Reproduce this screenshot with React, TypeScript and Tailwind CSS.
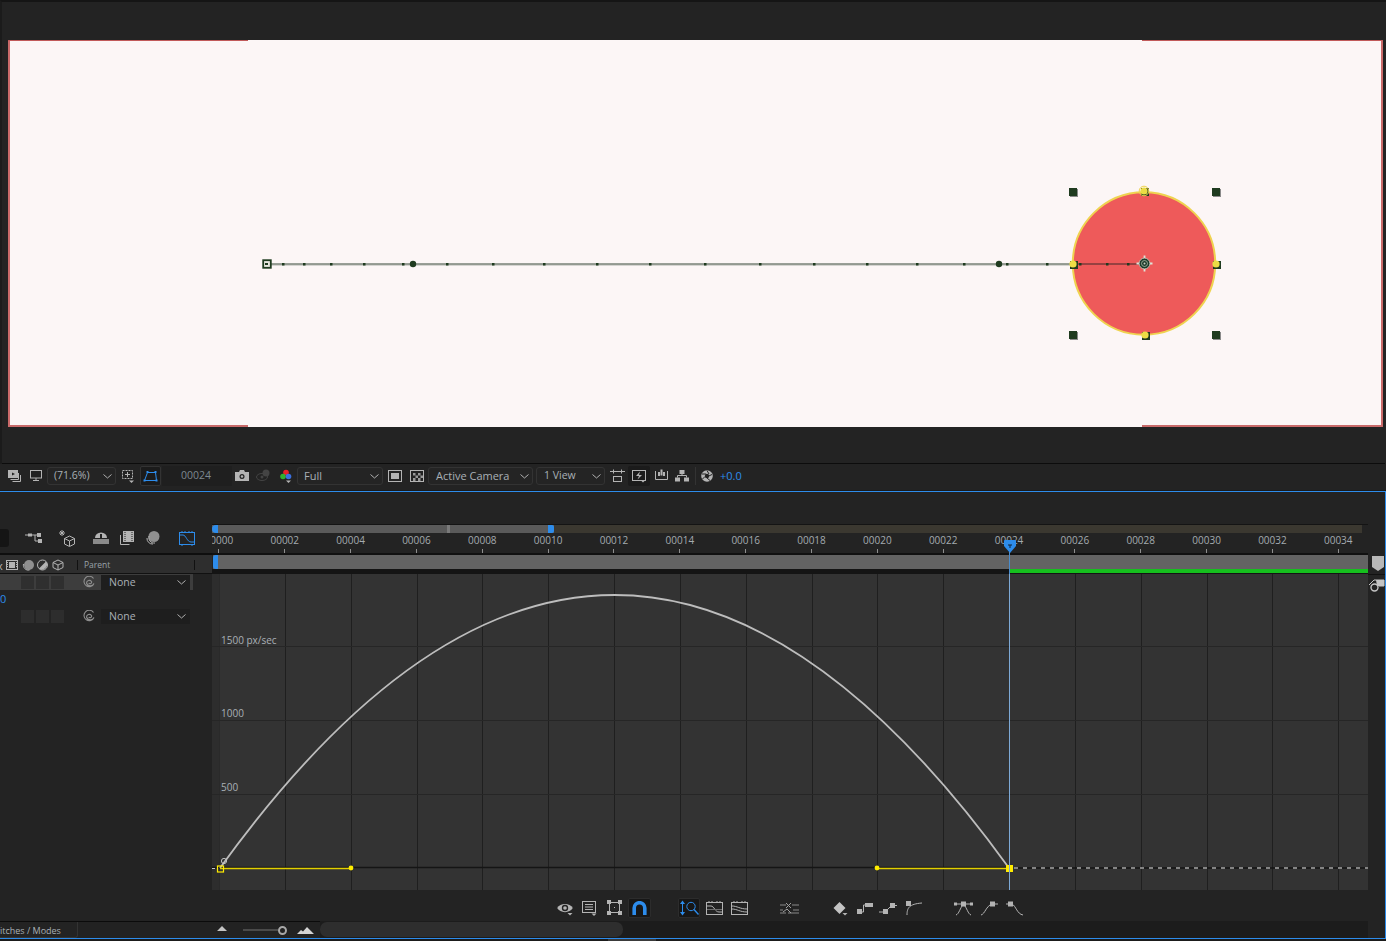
import React from "react";

const Ico = ({ w, h = 16, className = "", children }: { w: number; h?: number; className?: string; children?: React.ReactNode }) => (
  <svg width={w} height={h} viewBox={`0 0 ${w} ${h}`} fill="none" stroke="#b4b4b4" strokeWidth={1} className={`shrink-0 ${className}`}>
    {children}
  </svg>
);

const Chevron = () => (
  <svg width="9" height="5" viewBox="0 0 9 5" fill="none" stroke="#b0b0b0" strokeWidth={1} className="shrink-0">
    <path d="M0.5 0.5 L4.5 4 L8.5 0.5" />
  </svg>
);

const Drop = ({ className = "", label, small = false }: { className?: string; label: string; small?: boolean }) => (
  <div className={`h-[18px] shrink-0 rounded-[3px] border border-[#333333] bg-[#242424] flex items-center justify-between pl-[6px] pr-[3px] text-[#a9b0b6] ${small ? "text-[10.5px]" : "text-[11px]"} ${className}`}>
    <span className="whitespace-nowrap">{label}</span>
    <Chevron />
  </div>
);

const Arrow = ({ x, y }: { x: number; y: number }) => <path d={`M${x} ${y} h5 l-2.5 2.5 z`} fill="#b4b4b4" stroke="none" />;

const ViewerToolbar = () => (
  <div className="h-[26px] shrink-0 flex items-center pl-[8px] pb-[2px] bg-[#232323]">
    <Ico w={13}>
      <rect x="0.5" y="2.5" width="9" height="7" fill="#b4b4b4" />
      <path d="M4 4.5 l3 1.5 -3 1.5z" fill="#232323" stroke="none" />
      <path d="M10.5 5 v6.5 h-8 M12.5 7 v6.5 h-8" />
    </Ico>
    <Ico w={12} className="ml-[9px]">
      <rect x="0.5" y="2.5" width="11" height="7.5" />
      <path d="M6 10 v2 M3 12.5 h6" />
    </Ico>
    <Drop className="ml-[5px] w-[69px]" label="(71.6%)" small />
    <Ico w={14} className="ml-[5px]">
      <rect x="1.5" y="2.5" width="10" height="8" strokeDasharray="2 1" />
      <path d="M6.5 4 v5 M4 6.5 h5" />
      <Arrow x={8} y={12.5} />
    </Ico>
    <div className="ml-[5px] w-[21px] h-[20px] shrink-0 rounded-[2px] border border-[#333333] bg-[#1b1b1b] flex items-center justify-center">
      <svg width="15" height="13" viewBox="0 0 15 13" fill="none" stroke="#2d8ceb" strokeWidth={1}>
        <path d="M4.5 2.5 H12.5 L13.5 10.5 H1.5 Z" />
        <rect x="3.5" y="1" width="2" height="2" fill="#2d8ceb" stroke="none" />
        <rect x="11.5" y="1" width="2" height="2" fill="#2d8ceb" stroke="none" />
        <rect x="0.5" y="9.5" width="2" height="2" fill="#2d8ceb" stroke="none" />
        <rect x="12.5" y="9.5" width="2" height="2" fill="#2d8ceb" stroke="none" />
      </svg>
    </div>
    <div className="ml-[1px] w-[70px] h-[20px] shrink-0 bg-[#1f1f1f] flex items-center justify-center pr-[2px] text-[10.5px] text-[#7d8890]">00024</div>
    <Ico w={14} className="ml-[3px]">
      <path d="M0 4 h4 l1 -2 h4 l1 2 h4 v9 h-14z" fill="#b4b4b4" stroke="none" />
      <circle cx="7" cy="8.5" r="2.5" fill="#232323" stroke="none" />
      <circle cx="7" cy="8.5" r="1.2" fill="#b4b4b4" stroke="none" />
    </Ico>
    <Ico w={15} className="ml-[7px]">
      <circle cx="10" cy="5" r="3.5" fill="#444444" stroke="none" />
      <ellipse cx="6" cy="9" rx="5.5" ry="3.5" stroke="#444444" />
      <circle cx="6" cy="9" r="1.5" fill="#444444" stroke="none" />
    </Ico>
    <Ico w={12} className="ml-[9px]">
      <circle cx="6" cy="4.5" r="2.8" fill="#e8202a" stroke="none" />
      <circle cx="3" cy="8.5" r="2.8" fill="#30b030" stroke="none" />
      <circle cx="8.5" cy="8.5" r="2.8" fill="#3b70e0" stroke="none" />
      <Arrow x={6} y={12.5} />
    </Ico>
    <Drop className="ml-[5px] w-[86px]" label="Full" />
    <Ico w={14} className="ml-[5px]">
      <rect x="0.5" y="2.5" width="13" height="11" />
      <rect x="3" y="5" width="8" height="6" fill="#b4b4b4" stroke="none" />
    </Ico>
    <Ico w={14} className="ml-[8px]">
      <rect x="0.5" y="2.5" width="13" height="11" />
      <path d="M3 5h2.5v2.5H3z M8 5h2.5v2.5H8z M5.5 7.5H8V10H5.5z M10.5 7.5H13V10h-2.5z M3 10h2.5v3H3z M8 10h2.5v3H8z" fill="#999999" stroke="none" />
    </Ico>
    <Drop className="ml-[4px] w-[105px] pl-[7px]" label="Active Camera" />
    <Drop className="ml-[3px] w-[69px] pl-[7px]" label="1 View" small />
    <Ico w={15} className="ml-[5px]">
      <path d="M0 3.5 h15 M3.5 1.5 v4 M11.5 1.5 v4" />
      <rect x="3.5" y="8.5" width="8" height="5" />
    </Ico>
    <div className="ml-[3px] w-[22px] h-[20px] shrink-0 rounded-[2px] bg-[#1b1b1b] flex items-center justify-center">
      <Ico w={14} h={13}>
        <rect x="0.5" y="0.5" width="13" height="10" />
        <path d="M8 1.5 L4 6 h3 L5.5 9.5 L10 5 H7z" fill="#b4b4b4" stroke="none" />
        <Arrow x={8.5} y={10} />
      </Ico>
    </div>
    <Ico w={13} className="ml-[5px]">
      <path d="M0.5 3 v8.5 h12 V3" />
      <path d="M4 4 v4 M6.5 1.5 v6 M9 4 v4" strokeWidth={2} />
    </Ico>
    <Ico w={14} className="ml-[7px]">
      <rect x="4.5" y="2" width="5" height="4" fill="#b4b4b4" stroke="none" />
      <rect x="0" y="9.5" width="5" height="4" fill="#b4b4b4" stroke="none" />
      <rect x="9" y="9.5" width="5" height="4" fill="#b4b4b4" stroke="none" />
      <path d="M7 6 v2 M2.5 9.5 V7.5 H11.5 V9.5" />
    </Ico>
    <div className="ml-[6px] w-px h-[18px] shrink-0 bg-[#333333]" />
    <Ico w={12} className="ml-[5px]">
      <circle cx="6" cy="8" r="5.8" fill="#b4b4b4" stroke="none" />
      <circle cx="6" cy="8" r="2.2" fill="#232323" stroke="none" />
      <path d="M6 2.5 L8 6 M11 6.5 L7.8 8 M9 12.5 L6 10 M1.5 11 L4 8.5 M1 6 L5 6" stroke="#232323" />
    </Ico>
    <span className="ml-[7px] text-[11px] text-[#2d8ceb]">+0.0</span>
  </div>
);

const Composition = () => {
  const dots = [283, 304, 331, 364, 403, 447, 493, 544, 597, 650, 705, 760, 814, 867, 917, 964, 1007, 1047];
  const inner = [1080, 1107, 1128];
  const corners: [number, number][] = [[1073, 192], [1216, 192], [1073, 335], [1216, 335]];
  const mids: [number, number][] = [[1073, 264], [1216, 264], [1145, 335], [1144, 191]];
  return (
    <div className="relative ml-[8px] mt-[38px] w-[1375px] h-[387px] bg-[#fcf6f6] shrink-0">
      <div className="absolute left-0 top-0 bottom-0 w-[2px] bg-[#c96a6a]" />
      <div className="absolute right-0 top-0 bottom-0 w-[2px] bg-[#c96a6a]" />
      <div className="absolute left-0 top-0 w-[240px] h-px bg-[#c15a5a]" />
      <div className="absolute right-0 top-0 w-[241px] h-px bg-[#c15a5a]" />
      <div className="absolute left-0 bottom-0 w-[240px] h-[2px] bg-[#c96a6a]" />
      <div className="absolute right-0 bottom-0 w-[241px] h-[2px] bg-[#c96a6a]" />
      <svg className="absolute inset-0" width="1375" height="387" viewBox="8 40 1375 387">
        <path d="M267 264.5 H1073" stroke="#c9c9c5" strokeWidth="2.4" />
        <path d="M267 264 H1073" stroke="#5c6a5c" strokeWidth="1" />
        <circle cx="1144" cy="263.5" r="71.2" fill="#ee5a5a" stroke="#efd350" strokeWidth="2" />
        <path d="M1073 264 H1145" stroke="#7a3a3a" strokeWidth="1.6" />
        {dots.map((x) => (
          <rect key={x} x={x - 1} y={263} width="2.5" height="2.5" fill="#1f3b1f" />
        ))}
        {inner.map((x) => (
          <rect key={x} x={x - 1} y={263} width="2.5" height="2.5" fill="#1f3b1f" />
        ))}
        <circle cx="413" cy="264" r="3.2" fill="#1f3b1f" />
        <circle cx="999" cy="264" r="3.2" fill="#1f3b1f" />
        <rect x="263.2" y="260.2" width="7.6" height="7.6" fill="#e8e8e0" stroke="#1f3b1f" strokeWidth="1.8" />
        <rect x="265" y="263" width="3" height="2" fill="#1f3b1f" />
        {corners.map(([x, y]) => (
          <g key={`${x}-${y}`}>
            <rect x={x - 3} y={y - 3} width="8" height="8" fill="#8a8a8a" />
            <rect x={x - 4} y={y - 4} width="8" height="8" fill="#1f3b1f" />
          </g>
        ))}
        {mids.map(([x, y]) => (
          <g key={`${x}-${y}`}>
            <rect x={x - 3} y={y - 3} width="8" height="8" fill="#1f3b1f" />
            <circle cx={x} cy={y} r="3.6" fill="#ecdc45" />
          </g>
        ))}
        <circle cx="1144" cy="191" r="4.8" fill="none" stroke="#efd350" strokeWidth="1" />
        <g transform="translate(1144.5 263.5)">
          <path d="M-8 0 H8 M0 -8 V8" stroke="#dfe4d8" strokeWidth="1.8" />
          <circle r="5.4" fill="#1f3b2c" stroke="#c8d0c0" strokeWidth="0.8" />
          <circle r="3" fill="none" stroke="#a8c0a8" strokeWidth="0.8" />
          <circle r="1" fill="#c8d0c0" />
        </g>
      </svg>
    </div>
  );
};

const LayerSquares = ({ tone }: { tone: string }) => (
  <div className="flex gap-[2px] ml-[21px]">
    <div className={`w-[13px] h-[13px] ${tone}`} />
    <div className={`w-[13px] h-[13px] ${tone}`} />
    <div className={`w-[13px] h-[13px] ${tone}`} />
  </div>
);

const Spiral = () => (
  <Ico w={12} h={12} className="ml-[19px]">
    <path d="M10.5 2.5 A5.2 5.2 0 1 0 11 7.5 A4 4 0 0 1 3.5 7 A2.8 2.8 0 0 1 8.5 5.5 A1.6 1.6 0 0 1 5.7 7" stroke="#8e8e8e" strokeWidth="1.1" />
  </Ico>
);

const NoneBox = () => (
  <div className="ml-[6px] w-[89px] h-[15px] bg-[#1e1e1e] flex items-center justify-between pl-[7px] pr-[4px] text-[10.5px] text-[#a9b0b6]">
    <span className="ml-px pt-[2px]">None</span>
    <Chevron />
  </div>
);

const TimelineLeft = () => (
  <div className="w-[212px] shrink-0 flex flex-col bg-[#232323]">
    <div className="h-[29px] shrink-0 flex items-center pb-[2px]">
      <div className="w-[9px] h-[18px] bg-[#151515] rounded-r-[3px] shrink-0" />
      <Ico w={17} className="ml-[16px]">
        <path d="M0 5 h7 M7 5 h5 M10 5 v6 h3" />
        <rect x="3" y="3.5" width="4" height="3" fill="#b4b4b4" stroke="none" />
        <rect x="12" y="3" width="4" height="4" fill="#b4b4b4" stroke="none" />
        <rect x="13" y="9" width="4" height="4" fill="#b4b4b4" stroke="none" />
      </Ico>
      <Ico w={17} h={18} className="ml-[16px]">
        <path d="M4 1 v6 M1 4 h6 M2 2 l4 4 M6 2 l-4 4" />
        <path d="M11.5 7 l5 2.5 v5.5 l-5 2.5 -5 -2.5 v-5.5z M6.5 9.5 l5 2.5 5 -2.5 M11.5 12 v5" />
      </Ico>
      <Ico w={16} className="ml-[18px]">
        <path d="M2 8 a6 5.5 0 0 1 12 0z" fill="#b4b4b4" stroke="none" />
        <rect x="7" y="4" width="2" height="6" fill="#232323" stroke="none" />
        <rect x="0" y="9" width="16" height="5" fill="#8a8a8a" stroke="none" />
      </Ico>
      <Ico w={14} className="ml-[11px]">
        <path d="M0.5 5 v9.5 h9" />
        <rect x="3" y="1" width="11" height="11" fill="#b4b4b4" stroke="none" />
        <path d="M5 2 v9 M12 2 v9" stroke="#232323" strokeDasharray="1 1" />
      </Ico>
      <Ico w={14} className="ml-[12px]">
        <circle cx="8" cy="6.5" r="5.5" fill="#8f8f8f" stroke="none" />
        <path d="M3 6 a5.5 5.5 0 0 0 6 7 M1 8 a5.5 5.5 0 0 0 6 6" />
      </Ico>
      <svg width="16" height="16" viewBox="0 0 16 16" fill="none" stroke="#2d8ceb" strokeWidth={1} className="ml-[19px] shrink-0">
        <rect x="0.5" y="2.5" width="15" height="12" />
        <path d="M3 1 v2 M6 1 v2 M10 1 v2 M13 1 v2 M3 14 v2 M13 14 v2" />
        <path d="M1 5 h3 c3 0 4 7 8 7 h3" />
      </svg>
    </div>
    <div className="h-[2px] shrink-0 bg-[#0e0e0e]" />
    <div className="h-[18px] shrink-0 flex items-center pt-[2px] bg-[#2e2e2e] text-[8.5px] text-[#9aa2a8]">
      <span className="w-[6px] -ml-[3px] text-[11px] leading-[11px] text-[#b4b4b4]">x</span>
      <Ico w={12} h={12} className="ml-[3px]">
        <rect x="0.5" y="1.5" width="11" height="9" stroke="#b4b4b4" />
        <rect x="3" y="3" width="6" height="6" fill="#b4b4b4" stroke="none" />
        <path d="M1.5 3 v6 M10.5 3 v6" strokeDasharray="1 1" />
      </Ico>
      <Ico w={14} h={12} className="ml-[3px]">
        <circle cx="8" cy="6" r="5" fill="#8f8f8f" stroke="none" />
        <path d="M2.5 5 a5 5 0 0 0 6 6" />
      </Ico>
      <Ico w={11} h={12} className="ml-[2px]">
        <circle cx="5.5" cy="6" r="5" stroke="#b4b4b4" />
        <path d="M9 2.5 a5 5 0 0 1 -7 7z" fill="#b4b4b4" stroke="none" />
      </Ico>
      <Ico w={12} h={12} className="ml-[4px]">
        <path d="M6 1 l5 2.5 v5 l-5 2.5 -5 -2.5 v-5z M1 3.5 l5 2.5 5 -2.5 M6 6 v5" />
      </Ico>
      <div className="ml-[13px] w-px h-[10px] bg-[#111111]" />
      <span className="ml-[6px] w-[26px]">Parent</span>
      <div className="ml-[84px] w-px h-[10px] bg-[#111111]" />
    </div>
    <div className="h-px shrink-0 bg-[#111111]" />
    <div className="h-[16px] shrink-0 flex items-center bg-[#232323]">
      <div className="w-[193px] h-full flex items-center bg-[#3d3d3d]">
        <LayerSquares tone="bg-[#2f2f2f]" />
        <Spiral />
        <NoneBox />
      </div>
    </div>
    <div className="h-[18px] shrink-0 flex items-center text-[11px] text-[#2d8ceb]">
      <span>0</span>
    </div>
    <div className="h-[16px] shrink-0 flex items-center">
      <LayerSquares tone="bg-[#2d2d2d]" />
      <Spiral />
      <NoneBox />
    </div>
  </div>
);

const labels = ["00000", "00002", "00004", "00006", "00008", "00010", "00012", "00014", "00016", "00018", "00020", "00022", "00024", "00026", "00028", "00030", "00032", "00034"];
const gridX = [219, 285, 351, 417, 482, 548, 614, 680, 746, 812, 877, 943, 1075, 1141, 1207, 1272, 1338];

const Ruler = () => (
  <div className="h-[19px] shrink-0 overflow-hidden flex bg-[#232323]">
    <div className="flex -ml-[26px]">
      {labels.map((l) => (
        <div key={l} className="w-[65.85px] shrink-0 flex flex-col items-center text-[10px] leading-[12px] text-[#a4abb0]">
          <span>{l}</span>
          <div className="w-px h-[4px] mt-[3px] bg-[#8f8f8f]" />
        </div>
      ))}
    </div>
  </div>
);

const Graph = () => (
  <div className="relative h-[316px] shrink-0 bg-[#333333] overflow-hidden">
    <svg className="absolute inset-0" width="1156" height="316" viewBox="212 574 1156 316" fill="none">
      <rect x="212" y="574" width="7" height="316" fill="#2d2d2d" />
      {gridX.map((x) => (
        <path key={x} d={`M${x + 0.5} 574 V890`} stroke={x === 219 ? "#2a2a2a" : "#1f1f1f"} />
      ))}
      <path d="M212 646.5 H1368 M212 720.5 H1368 M212 794.5 H1368" stroke="#262626" />
      <path d="M212 867.5 H1009" stroke="#151515" strokeWidth="1.4" />
      <path d="M1014 868 H1368" stroke="#151515" strokeWidth="1.4" />
      <path d="M1014 868 H1368" stroke="#a8a8a8" strokeWidth="1.4" strokeDasharray="4 5" />
      <path d="M220 868 Q614.5 322 1009 868" stroke="#bdbdbd" strokeWidth="1.8" />
      <path d="M1009.5 574 V890" stroke="#7da9d6" strokeWidth="1" />
      <path d="M220 868.5 H351 M877 868.5 H1009" stroke="#e3d000" strokeWidth="1.4" />
      <circle cx="351" cy="868" r="2.4" fill="#ffec00" />
      <circle cx="877" cy="868" r="2.4" fill="#ffec00" />
      <rect x="217.5" y="866" width="6" height="6" stroke="#ffec00" strokeWidth="1.2" />
      <rect x="1006" y="865" width="3" height="7" fill="#ffec00" />
      <rect x="1010" y="865" width="3" height="7" fill="#ffec00" />
      <circle cx="224" cy="861" r="2.6" stroke="#c4c4c4" strokeWidth="1" />
      <path d="M212 868.5 H215" stroke="#c4c4c4" />
    </svg>
    <span className="absolute left-[9px] top-[60px] text-[10px] leading-[12px] text-[#a9b0b6]">1500 px/sec</span>
    <span className="absolute left-[9px] top-[133px] text-[10px] leading-[12px] text-[#a9b0b6]">1000</span>
    <span className="absolute left-[9px] top-[207px] text-[10px] leading-[12px] text-[#a9b0b6]">500</span>
  </div>
);

const GraphToolbar = () => (
  <div className="flex-1 flex items-center pl-[345px] pt-[5px] bg-[#232323]">
    <Ico w={16}>
      <path d="M0.2 8 C3 2.5 13 2.5 15.8 8 C13 13.5 3 13.5 0.2 8z" fill="#b4b4b4" stroke="none" />
      <circle cx="8" cy="8" r="3.2" fill="#232323" stroke="none" />
      <circle cx="8" cy="8" r="1.8" fill="#b4b4b4" stroke="none" />
      <Arrow x={10.5} y={13} />
    </Ico>
    <Ico w={15} className="ml-[9px]">
      <rect x="0.5" y="1.5" width="13" height="11" />
      <path d="M3 4.5 h8 M3 7 h8 M3 9.5 h8" />
      <Arrow x={9.5} y={13.5} />
    </Ico>
    <Ico w={15} className="ml-[10px]">
      <rect x="2.5" y="2.5" width="10" height="10" />
      <path d="M0 0h4v4H0z M11 0h4v4h-4z M0 11h4v4H0z M11 11h4v4h-4z" fill="#b4b4b4" stroke="none" />
      <rect x="7" y="7" width="1" height="1" fill="#b4b4b4" stroke="none" />
    </Ico>
    <div className="ml-[6px] w-[23px] h-[20px] shrink-0 rounded-[2px] border border-[#2c2c2c] bg-[#171717] flex items-center justify-center">
      <svg width="15" height="14" viewBox="0 0 15 14" fill="none" stroke="#2d8ceb" strokeWidth={3.6}>
        <path d="M2.2 14 V7 a5.3 5.3 0 0 1 10.6 0 V14" />
      </svg>
    </div>
    <div className="ml-[27px] w-[22px] h-[20px] shrink-0 rounded-[2px] border border-[#2c2c2c] bg-[#171717] flex items-center justify-center">
      <svg width="19" height="16" viewBox="0 0 19 16" fill="none" stroke="#2d8ceb" strokeWidth={1}>
        <path d="M2.5 2 V14" />
        <path d="M0 4 L2.5 0.5 L5 4z M0 12 L2.5 15.5 L5 12z" fill="#2d8ceb" stroke="none" />
        <circle cx="11" cy="6.5" r="4.2" />
        <path d="M14 9.5 L18.5 14.5" strokeWidth={1.4} />
      </svg>
    </div>
    <Ico w={17} className="ml-[6px]">
      <rect x="0.5" y="2.5" width="16" height="12" />
      <path d="M3 1 v2 M6 1 v2 M11 1 v2 M14 1 v2" />
      <path d="M1 6 h4 c3 0 4 6 8 6 h3" />
      <path d="M1 9.5 h15" stroke="#6e6e6e" />
    </Ico>
    <Ico w={17} className="ml-[8px]">
      <rect x="0.5" y="2.5" width="16" height="12" />
      <path d="M3 1 v2 M6 1 v2 M11 1 v2 M14 1 v2" />
      <path d="M1 6 c5 0 8 3 15 3 M1 9 c5 0 8 3 15 3" />
    </Ico>
    <Ico w={19} className="ml-[32px]">
      <path d="M0 5 h6 M12 5 h7 M0 10 h3 M13 10 h6 M8 13 h11 M0 13 h6" stroke="#8a8a8a" />
      <path d="M6 3 l5 5 M11 3 l-5 5 M3 12 l4 -3 4 4" stroke="#a0a0a0" />
    </Ico>
    <Ico w={15} className="ml-[34px]">
      <path d="M6.5 2 L12.5 8 L6.5 14 L0.5 8z" fill="#c4c4c4" stroke="none" />
      <Arrow x={9.5} y={13} />
    </Ico>
    <Ico w={18} className="ml-[7px]">
      <path d="M7 12 h1.5 V5 H11" />
      <rect x="2" y="9" width="5" height="5" fill="#b4b4b4" stroke="none" />
      <rect x="10" y="3" width="8" height="4" fill="#b4b4b4" stroke="none" />
    </Ico>
    <Ico w={18} className="ml-[6px]">
      <path d="M0 12 h5 M8 10 L12 6 M15 5.5 h3" />
      <rect x="4" y="9" width="5" height="5" fill="#b4b4b4" stroke="none" />
      <rect x="11" y="3" width="5" height="5" fill="#b4b4b4" stroke="none" />
    </Ico>
    <Ico w={16} className="ml-[9px]">
      <path d="M1 15 C1 8 3 4 16 3" />
      <rect x="0" y="1" width="5" height="5" fill="#b4b4b4" stroke="none" />
    </Ico>
    <Ico w={19} className="ml-[32px]">
      <path d="M2 15 C5 14 6 8 9.5 4 C13 8 14 14 17 15" />
      <path d="M0 4 h19" />
      <rect x="7" y="1.5" width="5" height="5" fill="#b4b4b4" stroke="none" />
      <rect x="0" y="2.5" width="3" height="3" fill="#b4b4b4" stroke="none" />
      <rect x="16" y="2.5" width="3" height="3" fill="#b4b4b4" stroke="none" />
    </Ico>
    <Ico w={17} className="ml-[8px]">
      <path d="M0 15 C4 14 5 6 11 4 h6" />
      <rect x="9" y="1.5" width="5" height="5" fill="#b4b4b4" stroke="none" />
    </Ico>
    <Ico w={18} className="ml-[7px]">
      <path d="M1 4 h6 C11 6 12 14 18 15" />
      <rect x="3" y="1.5" width="5" height="5" fill="#b4b4b4" stroke="none" />
    </Ico>
  </div>
);

const TimelineCenter = () => (
  <div className="w-[1156px] shrink-0 flex flex-col bg-[#232323]">
    <div className="h-[10px] shrink-0 flex border-t border-[#141414] pb-px pr-[6px] bg-[#232323]">
      <div className="w-[342px] shrink-0 flex bg-[#5a5a5a]">
        <div className="w-[6px] bg-[#2d8ceb] rounded-l-full" />
        <div className="ml-[229px] w-[3px] bg-[#7a7a7a]" />
        <div className="ml-auto w-[6px] bg-[#2d8ceb] rounded-r-[2px]" />
      </div>
      <div className="flex-1 bg-[#3b3830]" />
    </div>
    <Ruler />
    <div className="h-[2px] shrink-0 bg-[#111111]" />
    <div className="h-[14px] shrink-0 flex bg-[#636363]">
      <div className="w-[1px] bg-[#232323]" />
      <div className="w-[5px] bg-[#2d8ceb] rounded-l-[3px]" />
    </div>
    <div className="h-[5px] shrink-0 flex bg-[#141414]">
      <div className="w-[798px]" />
      <div className="flex-1 h-[4px] bg-[#16c01e]" />
    </div>
    <Graph />
    <GraphToolbar />
  </div>
);

const TimelineStrip = () => (
  <div className="w-[17px] shrink-0 flex flex-col bg-[#232323]">
    <div className="h-[31px]" />
    <svg width="17" height="18" viewBox="0 0 17 18" className="shrink-0">
      <path d="M4 1 H16 V12 L10 16 L4 12z" fill="#b8b8b8" />
    </svg>
    <div className="h-[1px] mt-px bg-[#111111]" />
    <svg width="17" height="16" viewBox="0 0 17 16" fill="none" stroke="#c4c4c4" className="shrink-0 mt-[2px]">
      <path d="M1 8 L6 3 H16 V9 H11" />
      <path d="M8 3 H16 V9 H9z" fill="#c4c4c4" stroke="none" />
      <circle cx="6.5" cy="10.5" r="3.5" strokeWidth="1.4" />
    </svg>
  </div>
);

const BottomBar = () => (
  <div className="h-[17px] shrink-0 flex">
    <div className="w-[320px] shrink-0 flex items-center border-t border-[#0b0b0b] bg-[#222222]">
      <div className="w-[78px] h-full shrink-0 overflow-hidden rounded-br-[3px] border-r border-b border-[#333333] bg-[#232323] flex items-center pt-[2px]">
        <span className="-ml-[12px] whitespace-nowrap text-[9px] text-[#a9b0b6]">Switches / Modes</span>
      </div>
      <svg width="12" height="8" viewBox="0 0 12 8" className="ml-[137px] shrink-0 -mt-[3px]">
        <path d="M0 6 H2 L5 3 L7 1 L10 4 L12 6z" fill="#c4c4c4" />
      </svg>
      <div className="ml-[16px] w-[35px] h-[2px] shrink-0 bg-[#4a4a4a]" />
      <div className="w-[9px] h-[9px] shrink-0 rounded-full border-2 border-[#a8a8a8]" />
      <svg width="18" height="9" viewBox="0 0 18 9" className="ml-[10px] shrink-0">
        <path d="M0 8 L4 4 L6 5.5 L10 1 L17 8z" fill="#d4d4d4" />
      </svg>
    </div>
    <div className="w-[1048px] shrink-0 flex bg-[#1c1c1c]">
      <div className="w-[303px] h-[15px] mt-px rounded-r-[7px] rounded-l-[7px] bg-[#2e2e2e]" />
    </div>
    <div className="flex-1 bg-[#232323]" />
  </div>
);

function PlayheadHead() {
  return (
    <>
      <div className="absolute left-[1004px] top-[540px] w-[12px] h-[13px]">
        <svg width="12" height="13" viewBox="0 0 12 13">
          <path d="M0 1 Q0 0 1 0 H11 Q12 0 12 1 V6 L6 13 L0 6z" fill="#2d8ceb" />
          <path d="M4 5 h4 M6 5 v3" stroke="#10243a" fill="none" />
        </svg>
      </div>
      <div className="absolute left-[1009px] top-[553px] w-px h-[21px] bg-[#4a8ccc]" />
    </>
  );
}

export default function App() {
  return (
    <div className="relative w-[1386px] h-[941px] overflow-hidden flex flex-col bg-[#1b1b1b] font-['Open_Sans',sans-serif]">
      <div className="h-[464px] shrink-0 flex flex-col bg-[#232323] border-t-2 border-[#151515] border-l-2 border-l-[#1b1b1b]">
        <div className="-ml-[2px]">
          <Composition />
        </div>
        <div className="mt-auto h-px bg-[#0c0c0c] mr-px" />
      </div>
      <ViewerToolbar />
      <div className="h-px shrink-0 bg-[#1a1a1a]" />
      <div className="h-[448px] shrink-0 flex flex-col border-t border-r border-b border-[#2d8ceb] bg-[#232323]">
        <div className="h-[32px] shrink-0" />
        <div className="h-[397px] shrink-0 flex">
          <TimelineLeft />
          <TimelineCenter />
          <TimelineStrip />
        </div>
        <BottomBar />
      </div>
      <div className="h-[2px] shrink-0 ml-[608px] w-[48px] bg-[#3a3a3a]" />
      <PlayheadHead />
    </div>
  );
}
